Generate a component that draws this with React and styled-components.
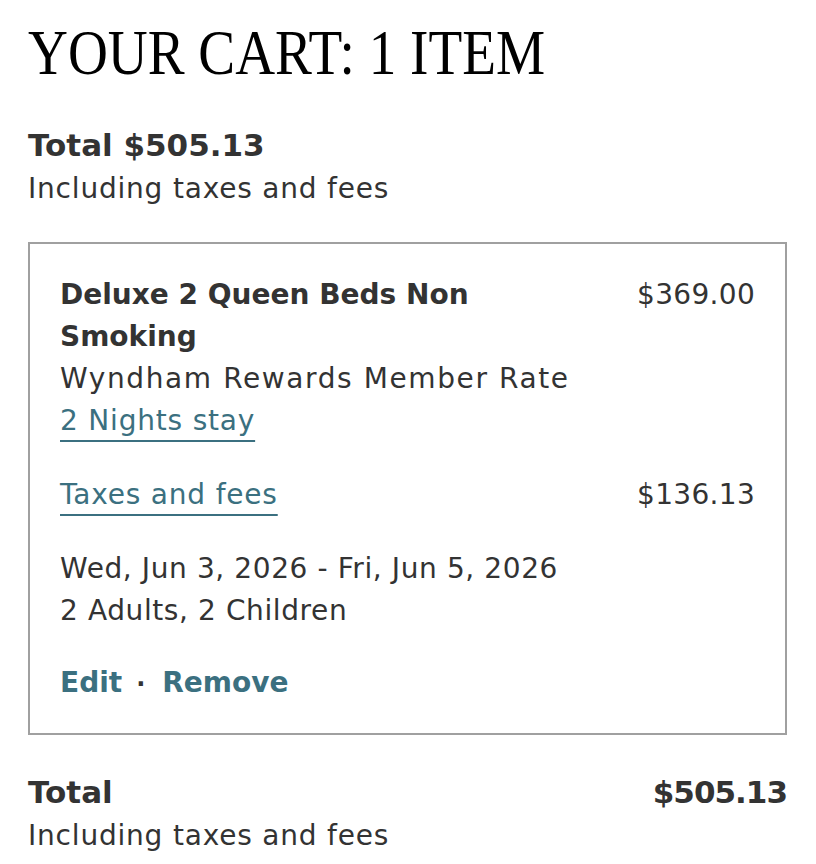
import React from "react";
import styled, { createGlobalStyle } from "styled-components";

const GlobalStyle = createGlobalStyle`
  html, body {
    margin: 0;
    padding: 0;
    background: #ffffff;
  }
  body {
    font-family: "DejaVu Sans", "Noto Sans", sans-serif;
    color: #333333;
    -webkit-font-smoothing: antialiased;
  }
  * { box-sizing: border-box; }
`;

const TEAL = "#3b7080";

const Page = styled.main`
  width: 816px;
  padding: 15px 29px 0 28px;
`;

const Title = styled.h1`
  margin: 0;
  font-family: "Liberation Serif", "DejaVu Serif", serif;
  font-weight: 400;
  font-size: 64px;
  line-height: 76px;
  color: #000000;
  white-space: nowrap;
  transform: scaleX(0.863);
  transform-origin: left center;
`;

const Summary = styled.section`
  margin-top: ${(p) => p.$mt || 0}px;
  display: flex;
  flex-direction: column;
`;

const SummaryRow = styled.div`
  display: flex;
  justify-content: space-between;
  align-items: baseline;
`;

const Strong = styled.div`
  font-size: 31px;
  line-height: 44px;
  font-weight: 700;
  color: #333333;
`;

const Amount = styled.span`
  letter-spacing: ${(p) => (p.$tight ? "-1px" : "0")};
`;

const Note = styled.div`
  font-size: 28px;
  line-height: 44px;
  letter-spacing: 0.8px;
  color: #333333;
`;

const Card = styled.section`
  margin-top: 31px;
  border: 2px solid #a0a0a0;
  padding: 30px 30px 29px 30px;
  display: flex;
  flex-direction: column;
`;

const ItemRow = styled.div`
  display: flex;
  justify-content: space-between;
  align-items: flex-start;
  margin-top: ${(p) => p.$mt || 0}px;
`;

const Details = styled.div`
  max-width: 520px;
  display: flex;
  flex-direction: column;
  align-items: flex-start;
`;

const RoomName = styled.div`
  font-size: 28px;
  line-height: 42px;
  font-weight: 700;
`;

const Text = styled.div`
  font-size: 28px;
  line-height: 42px;
  letter-spacing: ${(p) => p.$ls ?? 0.8}px;
  margin-top: ${(p) => p.$mt || 0}px;
`;

const Price = styled.div`
  font-size: 28px;
  line-height: 42px;
  letter-spacing: 0.3px;
  white-space: nowrap;
`;

const TextLink = styled.a`
  font-size: 28px;
  line-height: 42px;
  letter-spacing: 0.8px;
  color: ${TEAL};
  text-decoration: underline;
  text-decoration-thickness: 2px;
  text-underline-offset: 10px;
  cursor: pointer;
`;

const Actions = styled.div`
  margin-top: 30px;
  display: flex;
  align-items: baseline;
`;

const Action = styled.a`
  font-size: 28px;
  line-height: 42px;
  font-weight: 700;
  color: ${TEAL};
  text-decoration: none;
  cursor: pointer;
`;

const Dot = styled.span`
  font-size: 24px;
  font-weight: 700;
  color: #333333;
  margin: 0 17px 0 14px;
`;

export default function App() {
  return (
    <>
      <GlobalStyle />
      <Page>
        <Title>YOUR CART: 1 ITEM</Title>

        <Summary $mt={32}>
          <Strong>
            Total <Amount>$505.13</Amount>
          </Strong>
          <Note>Including taxes and fees</Note>
        </Summary>

        <Card>
          <ItemRow>
            <Details>
              <RoomName>Deluxe 2 Queen Beds Non Smoking</RoomName>
              <Text $ls={1.6}>Wyndham Rewards Member Rate</Text>
              <TextLink href="#">2 Nights stay</TextLink>
            </Details>
            <Price>$369.00</Price>
          </ItemRow>

          <ItemRow $mt={32}>
            <TextLink href="#">Taxes and fees</TextLink>
            <Price>$136.13</Price>
          </ItemRow>

          <Text $mt={32} $ls={0.6}>
            Wed, Jun 3, 2026 - Fri, Jun 5, 2026
            <br />2 Adults, 2 Children
          </Text>

          <Actions>
            <Action href="#">Edit</Action>
            <Dot>·</Dot>
            <Action href="#">Remove</Action>
          </Actions>
        </Card>

        <Summary $mt={35}>
          <SummaryRow>
            <Strong>Total</Strong>
            <Strong>
              <Amount $tight>$505.13</Amount>
            </Strong>
          </SummaryRow>
          <Note>Including taxes and fees</Note>
        </Summary>
      </Page>
    </>
  );
}
